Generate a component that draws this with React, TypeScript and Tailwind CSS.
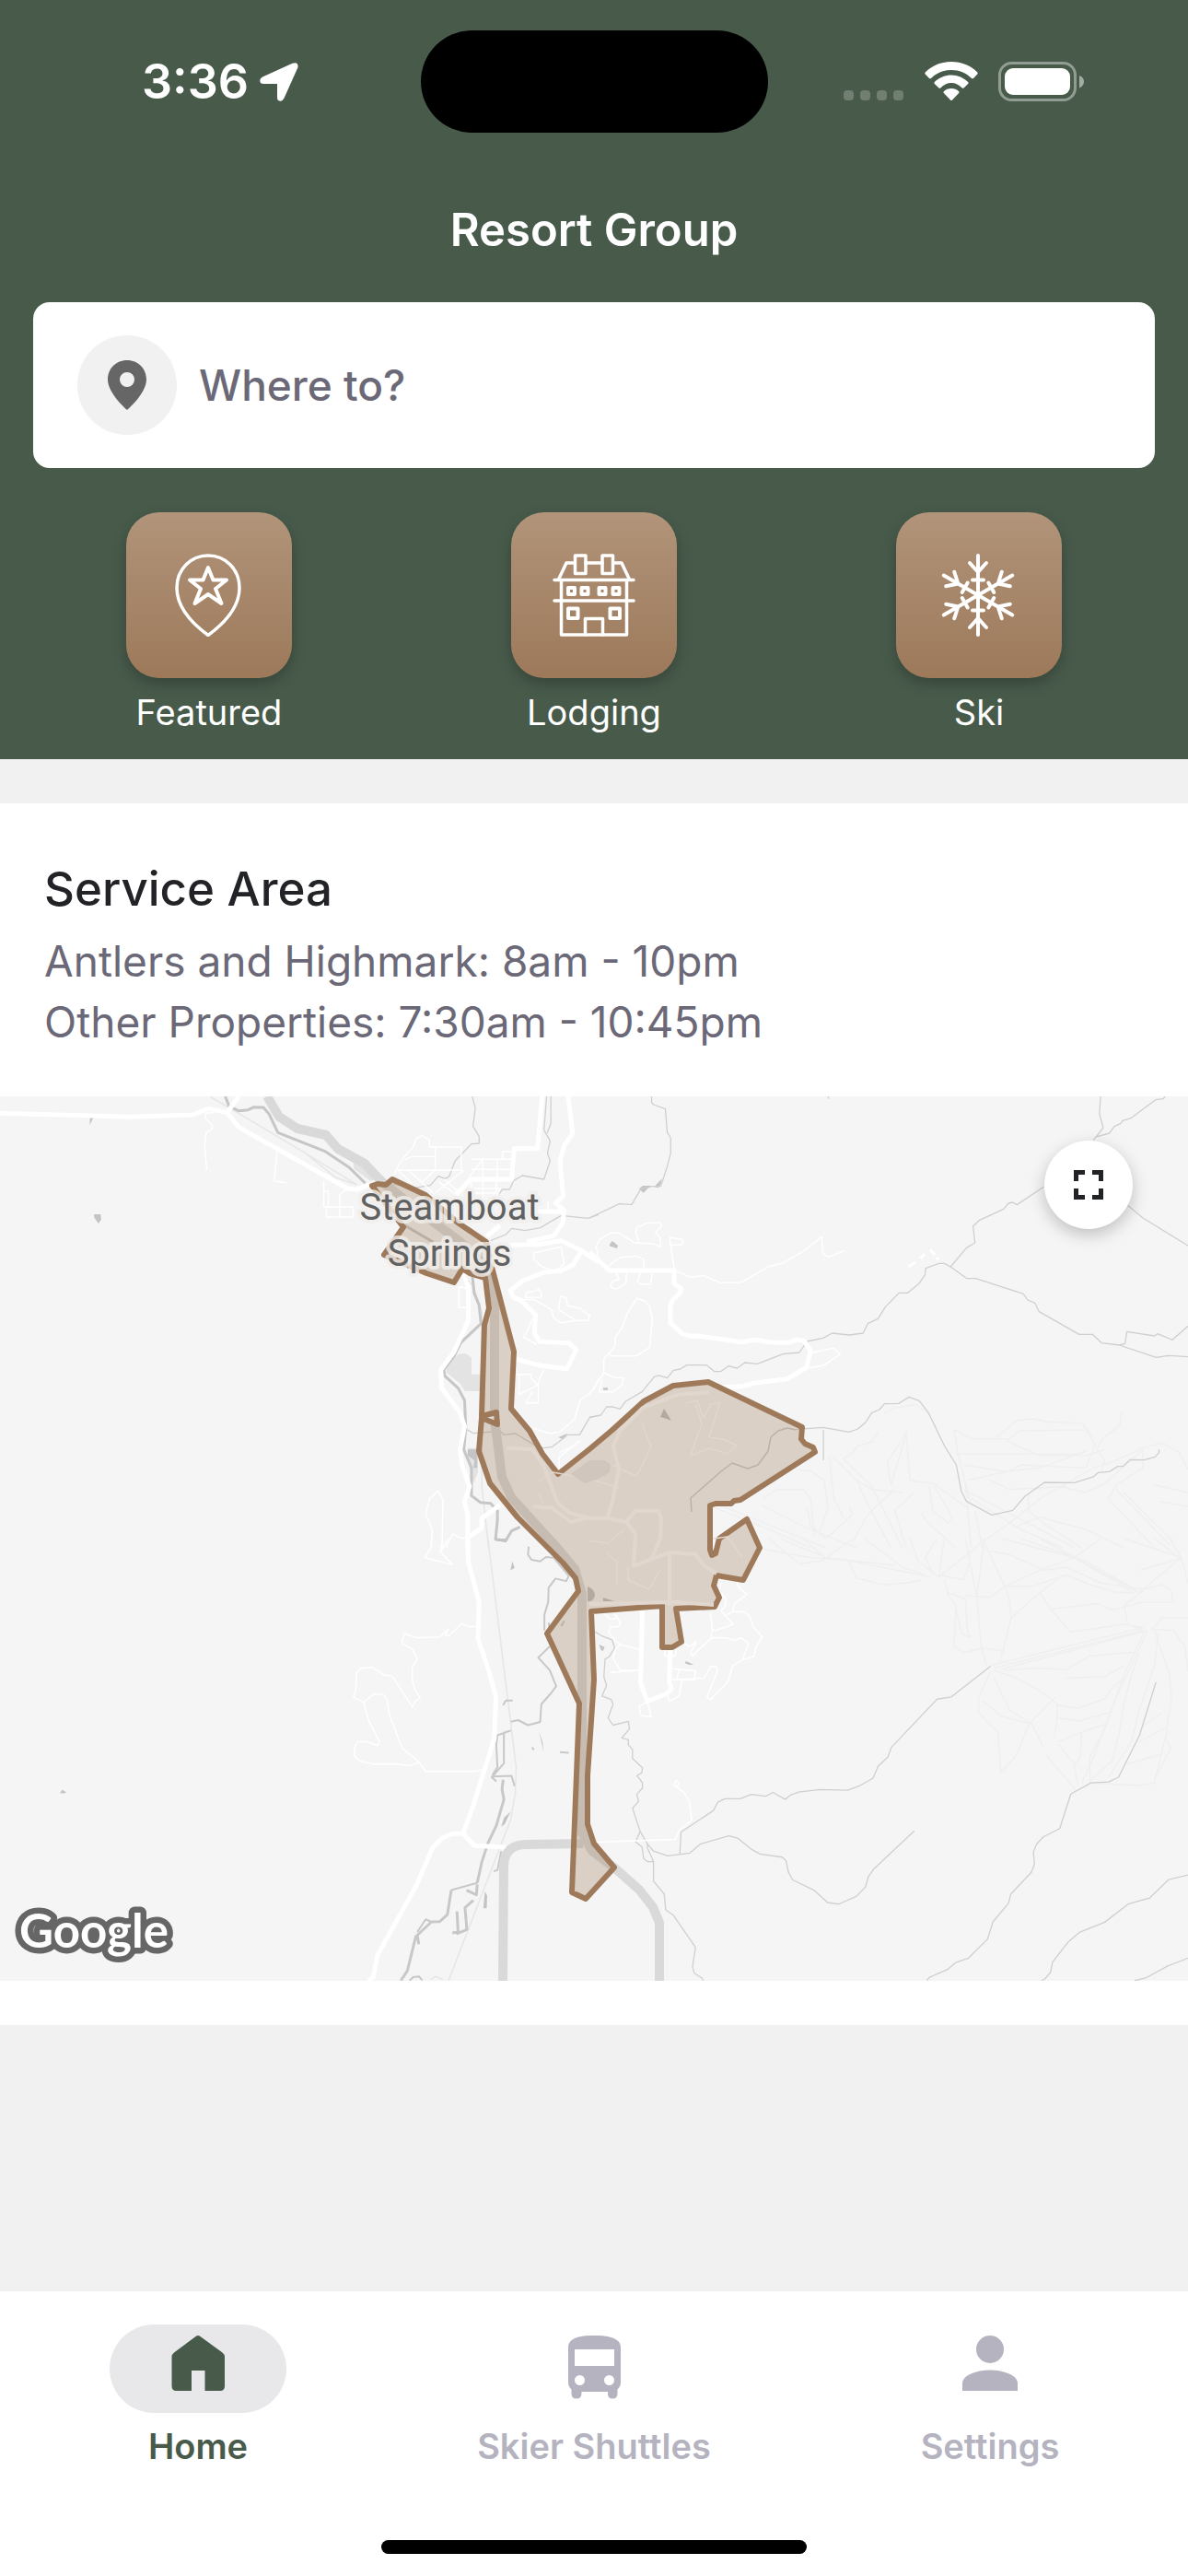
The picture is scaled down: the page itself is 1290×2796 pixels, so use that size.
import React from 'react';

type IconProps = { className?: string };

const FeaturedIcon: React.FC<IconProps> = ({ className }) => (
  <svg viewBox="0 0 90 90" className={className} fill="none" stroke="currentColor" strokeWidth="3.500" strokeLinejoin="round">
    <path d="M44 2C25 2 10 17 10 37C10 58 27 76 44 88.500C61 76 78 58 78 37C78 17 63 2 44 2Z" />
    <path strokeWidth="4" d="M44 15L49.500 28.500H64L52 38L58.500 54L44 44L29.500 54L36 38L24 28.500H38.500Z" />
  </svg>
);

const LodgingIcon: React.FC<IconProps> = ({ className }) => (
  <svg viewBox="0 0 90 90" className={className} fill="none" stroke="currentColor" strokeWidth="3.500" strokeLinejoin="round" strokeLinecap="round">
    <path d="M6.500 28L15 10H24M36 10H54M66 10H75L83.500 28" />
    <path d="M2 28.500H88M2 51H88M9.500 29V88H80.500V29" />
    <path d="M24.500 2H36V21.500H24.500ZM54 2H65.500V21.500H54Z" />
    <path strokeWidth="4" d="M17 37H24V44H17ZM31.500 37H38.500V44H31.500ZM50.500 37H57.500V44H50.500ZM65.500 37H72.500V44H65.500Z" />
    <path strokeWidth="4" d="M17 59.500H27.500V70H17ZM62.500 59.500H73V70H62.500Z" />
    <path d="M35.500 88V70.500H54.500V88" />
  </svg>
);

const SkiIcon: React.FC<IconProps> = ({ className }) => (
  <svg viewBox="0 0 90 90" className={className} fill="none" stroke="currentColor" strokeWidth="4" strokeLinecap="round" strokeLinejoin="round">
    {[0, 60, 120, 180, 240, 300].map((angle) => (
      <path key={angle} transform={`rotate(${angle} 44 45)`} d="M44 45V2M35 10L44 20L53 10M38 28.500H50" />
    ))}
  </svg>
);

const HomeIcon: React.FC<IconProps> = ({ className }) => (
  <svg viewBox="0 0 72 72" className={className} fill="currentColor">
    <path d="M33.500 1Q36 -1 38.500 1L62.500 18.500Q65 20.500 65 23V55Q65 60 60 60H43.500V38H29V60H12.500Q7.500 60 7.500 55V23Q7.500 20.500 10 18.500Z" />
  </svg>
);

const BusIcon: React.FC<IconProps> = ({ className }) => (
  <svg viewBox="0 0 72 72" className={className} fill="currentColor" fillRule="evenodd">
    <path d="M36 0C19 0 8 3 8 13V51Q8 55 11.500 58.500V63Q11.500 68.500 17 68.500Q22.500 68.500 22.500 63V61H51V63Q51 68.500 56 68.500Q61.500 68.500 61.500 63V58.500Q65 55 65 51V13C65 3 53 0 36 0ZM15 15H58V33H15ZM20.500 43A5.500 5.500 0 1 1 20.500 54A5.500 5.500 0 1 1 20.500 43ZM52.500 43A5.500 5.500 0 1 1 52.500 54A5.500 5.500 0 1 1 52.500 43Z" />
  </svg>
);

const PersonIcon: React.FC<IconProps> = ({ className }) => (
  <svg viewBox="0 0 72 72" className={className} fill="currentColor">
    <circle cx="36" cy="15" r="15" />
    <path d="M6 60V52C6 42 24 37.500 36 37.500C48 37.500 66 42 66 52V60Z" />
  </svg>
);

const categories = [
  { label: 'Featured', Icon: FeaturedIcon },
  { label: 'Lodging', Icon: LodgingIcon },
  { label: 'Ski', Icon: SkiIcon },
];

const tabs = [
  { label: 'Home', Icon: HomeIcon, active: true },
  { label: 'Skier Shuttles', Icon: BusIcon, active: false },
  { label: 'Settings', Icon: PersonIcon, active: false },
];

const StatusBar: React.FC = () => (
  <div className="grid grid-cols-3 items-center pt-[33px]">
    <div className="flex items-center justify-center gap-3 pl-12">
      <span className="text-[52px] leading-none font-semibold">3:36</span>
      <svg viewBox="0 0 42 42" className="h-[42px] w-[42px]" fill="currentColor">
        <path d="M35.500 .8Q42 -1.500 41.500 5L26.500 38.500Q24.500 42.500 21.500 41.500Q19 41 19 38V23H4Q.5 23 .3 20Q0 17 3 15.500Z" />
      </svg>
    </div>
    <div className="mx-auto h-[111px] w-[377px] rounded-full bg-black" />
    <div className="flex items-center justify-center pr-14">
      <svg viewBox="0 0 66 43" className="h-[43px] w-[66px]" fill="currentColor" fillOpacity=".22">
        <rect x="0" y="31" width="11" height="11" rx="4" />
        <rect x="18" y="31" width="11" height="11" rx="4" />
        <rect x="36" y="31" width="11" height="11" rx="4" />
        <rect x="54" y="31" width="11" height="11" rx="4" />
      </svg>
      <svg viewBox="0 0 58 43" className="ml-[22px] h-[43px] w-[58px]" fill="currentColor">
        <path d="M29 0C18 0 8 4 .7 11.500Q0 12.500 .7 13.500L5 18Q6 18.500 7 18C13 12 20.500 9 29 9C37.500 9 45 12 51 18Q52 18.500 53 18L57.300 13.500Q58 12.500 57.300 11.500C50 4 40 0 29 0Z" />
        <path d="M29 14.500C22 14.500 15.500 17.500 10.800 22Q10 23 10.800 24L15.500 28.500Q16.500 29 17.300 28.500C20.500 25 24.500 23 29 23C33.500 23 37.500 25 40.700 28.500Q41.500 29 42.500 28.500L47.200 24Q48 23 47.200 22C42.500 17.500 36 14.500 29 14.500Z" />
        <path d="M29 29C26 29 23 30 20.800 32.200Q20 33 20.800 34L28 41.500Q29 42.500 30 41.500L37.200 34Q38 33 37.200 32.200C35 30 32 29 29 29Z" />
      </svg>
      <svg viewBox="0 0 94 43" className="ml-[22px] h-[43px] w-[94px]" fill="currentColor">
        <rect x="1.500" y="1.500" width="82" height="40" rx="13" fill="none" stroke="currentColor" strokeOpacity=".4" strokeWidth="3" />
        <rect x="7" y="7" width="71" height="29" rx="9" />
        <path fillOpacity=".5" d="M88 15Q93 17 93 21.500Q93 26 88 28.500Z" />
      </svg>
    </div>
  </div>
);

const ServiceMap: React.FC = () => (
  <div className="relative bg-[#f5f5f5]">
    <svg
      viewBox="0 0 1290 960"
      className="block h-auto w-full [&_path]:[vector-effect:non-scaling-stroke]"
      fill="none"
      strokeLinejoin="round"
      role="img"
      aria-label="Service area around Steamboat Springs"
    >
      {/* north-west sheet */}
      <g transform="translate(0 -10) scale(.41454 .33333)">
        <g fill="#e3e3e3">
          <path d="M1170 905L1200 870L1218 866L1235 880V935H1260V990H1218L1205 965L1170 930Z" />
          <path d="M926 245L960 265L985 300L970 305L926 265ZM1225 1175H1252V1255L1240 1290L1230 1240Z" />
        </g>
        <g fill="#c4c4c4">
          <path d="M246 414H264L265 432L258 444L247 425ZM236 100L245 98L235 124ZM1463 1140L1487 1127L1475 1147ZM1225 1180H1250V1240H1240L1243 1215L1225 1200Z" />
        </g>
        <g stroke="#e6e6e6" strokeWidth="1.500">
          <path d="M550 30L800 215L935 318M795 210L880 295L935 318M1215 610L1240 650L1262 730V1300L1280 1500" />
        </g>
        <g stroke="#cfcfcf" strokeWidth="1.300">
          <path d="M1237 30L1245 68L1239 128L1255 160V183L1235 185L1192 240L1177 290L1167 298L1148 290L1127 320L1085 328L1030 315" />
          <path d="M1432 30L1425 140L1441 175L1434 215L1441 240L1425 300L1368 288L1345 305L1335 333H1316L1300 360L1270 367M1443 30V118L1433 150" />
          <path d="M1285 500L1325 480L1340 460L1375 467L1415 458L1470 418L1540 427L1568 415M1218 1112L1240 1127L1310 1120L1320 1132L1350 1128L1400 1165L1422 1175L1445 1172L1488 1132H1518L1545 1075L1568 1070" />
        </g>
        <g stroke="#c6c6c6" strokeWidth="3">
          <path d="M590 30L600 62L625 77L650 74L665 65L690 66L705 88L728 148L850 208L915 262L957 313" />
          <path d="M1060 450L1135 505M1237 610L1242 670L1255 710L1260 770L1207 832L1190 875L1163 920L1165 940L1200 980L1217 1020L1220 1110L1215 1180L1235 1240V1330L1258 1352L1285 1355L1303 1380V1410L1298 1472L1325 1476L1340 1445L1362 1432" />
        </g>
        <g stroke="#fff" strokeWidth="1.500">
          <path d="M560 83L540 85L537 100L557 125L554 138L540 148L536 190L542 270M726 210L718 305L750 311M905 335L890 350V390M848 305V390H925V423H855V392M848 338H860V390M890 392V423" />
          <path d="M1030 290L1050 240L1082 195L1090 168L1105 158L1125 172V195H1208V270H1042L1080 315M1140 197V270L1105 310M1060 235L1080 226H1140M1070 270L1135 345M1150 310L1190 345M1165 300L1200 340M1140 345L1215 270" />
          <path d="M1235 235H1340M1265 235L1230 290M1265 235V295M1302 235V295M1235 268H1340M1340 210H1316V235M1235 300V345H1300V300M1265 300V365M1235 330H1310L1300 365H1265M1435 370V400" />
          <path d="M1398 540L1470 520L1478 575L1455 600L1420 585L1398 560ZM1378 668L1398 665L1410 658L1418 670V685H1378ZM1345 690L1400 692L1445 725L1450 750L1468 767L1510 760M1468 682L1482 685L1487 712L1520 720L1545 745L1540 760L1510 760L1463 725ZM1400 745L1372 815L1405 837M1353 935H1392L1390 945L1408 970L1360 1000V935M1425 920L1410 960V1028H1378L1395 990" />
          <path d="M1568 950L1555 985L1520 1020L1505 1080L1468 1122L1440 1128L1395 1110M1520 1150L1465 1205V1250M1465 1190L1500 1170M1228 655L1202 650V718H1225M1148 1315L1125 1340L1115 1390L1132 1440L1130 1500M1148 1315L1160 1345L1158 1500M1168 1500L1185 1455L1205 1468H1225" />
        </g>
        <g stroke="#fff" strokeWidth="5">
          <path d="M0 85L345 97L505 90L545 70L595 83L625 30M595 83L625 130L910 330L935 334L970 315" />
          <path d="M1420 30L1408 200H1347L1340 300H1232L1195 350M1488 30L1500 150L1478 190L1467 240L1475 355L1455 378L1477 400L1475 440L1450 485L1380 503M1400 405H1475M1310 515L1410 512L1470 500L1520 530L1568 570M1525 530L1500 580L1470 598L1425 603L1370 630L1337 662L1345 685L1365 695L1403 742L1400 800L1413 828L1490 833L1510 855L1485 917L1410 905L1350 885M1275 485L1310 450" />
          <path d="M1212 605L1227 650V760L1190 860L1155 920L1157 980L1205 1060L1217 1105L1205 1180L1210 1230L1230 1300L1217 1350L1225 1390V1500M1227 1465L1262 1435V1405L1310 1360" />
        </g>
      </g>

      {/* north-east sheet */}
      <g transform="translate(640 -10) scale(.41454 .33333)">
        <g fill="#c4c4c4">
          <path d="M130 331L140 321H164L150 333L142 344ZM170 325L190 298L187 315L180 328ZM54 510L60 501L75 516L72 525L52 517ZM36 979H48V986H36Z" />
        </g>
        <g stroke="#efefef" strokeWidth="1.500">
          <path d="M772 1060L800 1045L855 1033L890 1065M835 1115L800 1185L780 1220L790 1295L830 1130L840 1280L860 1285L900 1290L940 1325L990 1370M755 1125L740 1155L700 1170L690 1190L665 1210L740 1300L820 1500M628 1200L640 1340L665 1400M635 1200L700 1280L730 1360L790 1500M540 1245L580 1250L615 1280L625 1370L600 1460M455 1340L490 1310L560 1310L580 1340L590 1460" />
          <path d="M955 1115L1000 1145L1100 1145L1125 1120L1300 1115L1325 1165L1300 1240L1130 1230L1100 1250L990 1280M955 1115L965 1195L1000 1360M960 1195H1290M980 1230L1090 1252L1180 1240L1300 1185M1065 1140L1120 1085L1160 1080L1200 1090L1290 1095L1320 1140M1090 1150L1180 1200H1300L1350 1180M1393 1060L1390 1100L1340 1150L1330 1180L1350 1215L1340 1250M1568 1245L1545 1190L1500 1158L1450 1175L1380 1215L1320 1240L1180 1340L1100 1420L1020 1490" />
          <path d="M980 1310L1150 1420L1270 1500M1000 1340L1130 1440L1240 1500M1150 1320V1380L1200 1430L1290 1500M1160 1310L1230 1300L1300 1320L1350 1290L1450 1180V1240M1450 1240L1380 1295L1360 1340L1480 1500M1380 1310L1520 1490M1400 1320L1530 1480M1480 1295L1568 1320M1495 1350L1568 1365M890 1300L900 1380L940 1420L950 1400L900 1290M870 1385L880 1410L960 1500M820 1320L740 1310L700 1280M570 1370L580 1430L620 1470L665 1420L690 1390L680 1370M985 1290L1000 1500M1010 1380L1030 1500" />
          <path d="M330 1370L450 1430L580 1500M350 1365L520 1450L620 1500M450 1360L560 1430L700 1500M800 1310L730 1390L690 1480M850 1320L800 1380L830 1500M1050 1280L1100 1310L1250 1300M1120 1430L1180 1400L1300 1440L1400 1500" />
        </g>
        <g stroke="#cfcfcf" strokeWidth="1.300">
          <path d="M163 30V50L168 57L199 71L204 148L213 165V215L203 262L187 323H165L135 331L111 382L78 380L0 426M626 30V38M613 1117V1215" />
          <path d="M0 1075L30 1068L45 1041H60L80 1048L95 1023L138 992L170 943L182 939L204 947L220 922L238 918L255 905H307L328 926H344L364 908L387 915L407 897L440 901L507 869L550 864L570 828L612 817L636 801L680 807L717 801L729 770L756 754L775 716L811 670H834L863 640L879 612L881 590L915 574H930L946 585L989 623H1012L1137 673L1148 693L1167 703L1178 731L1283 805H1318L1342 833L1388 840L1485 880L1516 874L1568 878" />
          <path d="M946 585L988 523L1010 507L1005 453L1022 433L1085 397L1098 378L1108 375L1120 383L1190 325M1320 173L1346 132L1336 87L1339 30M1324 163L1362 150L1375 128L1391 119L1397 109L1418 101L1483 41L1503 38L1508 30M1410 385L1450 426L1568 516M1388 840L1403 835L1408 796L1480 810L1488 803L1527 823L1568 778" />
          <path d="M540 1115L570 1112L613 1108L680 1123L703 1113L723 1092L740 1060L760 1050L773 1031L810 1030L837 1009L864 1021L888 1060L930 1168L961 1230L974 1315L987 1348L1054 1393L1109 1378L1141 1332L1192 1287L1270 1288L1320 1269L1333 1255L1362 1252L1384 1235H1397L1417 1213L1453 1214L1482 1204L1492 1190V1180" />
        </g>
        <g stroke="#fff" strokeWidth="1.500">
          <path d="M25 558L17 520L28 495L55 475H78L120 508L165 509L187 520L185 490L173 474L190 450L183 440L150 443L124 457L122 475L130 508M48 584L80 555L120 550L142 560L143 580L125 632L135 642H160L165 605M98 600L95 640L70 658L55 650L60 632L78 625L70 605" />
          <path d="M210 490L242 495L247 505L240 513L210 515M210 490L223 598L267 619L300 614L344 637L397 636L470 584L508 572L560 535L608 487L612 543L628 553L668 532" />
          <path d="M124 688L100 735L85 785L67 815V845L52 865L38 885V930L65 945L90 947L85 970L62 992H25L33 955M124 688L147 697L158 715L165 755L158 848L123 875H55L52 865M38 930L0 1000M583 865L640 850L657 870L612 907L570 915" />
        </g>
        <g stroke="#fff" strokeWidth="5">
          <path d="M0 537L52 597H222V640L240 655L238 670L218 693L212 713V767L243 803L265 811L285 810L400 830L432 823L475 831L520 832L545 822L563 827L580 860L568 913L518 950L435 963L400 974L350 977" />
          <path strokeWidth="3" d="M835 585L855 570M867 558L878 543M892 530L905 545M908 560L916 556" />
        </g>
      </g>

      {/* south-west sheet */}
      <g transform="translate(0 480) scale(.41454 .34439)">
        <g fill="#c4c4c4">
          <path d="M157 803L163 791L174 800L168 803ZM1337 100L1342 72L1348 92ZM1295 0H1332L1325 12L1297 6ZM1313 908L1320 880L1338 860L1330 880L1322 900ZM1266 1165L1270 1112L1276 1125L1275 1165ZM1412 610L1421 640L1424 672L1418 640Z" />
        </g>
        <g stroke="#e6e6e6" strokeWidth="1.500">
          <path d="M1278 0L1352 720L1350 800L1338 885L1175 1393M1128 1390L1142 1380L1160 1390" />
        </g>
        <g stroke="#c8c8c8" strokeWidth="2">
          <path d="M1385 25L1383 50L1392 67L1415 72L1430 58L1450 60L1490 118L1483 134L1455 126L1437 155L1436 200L1426 240V290M1440 340L1410 375L1440 415L1457 465L1445 485L1418 522L1415 578L1383 588L1357 572L1338 577M1338 605L1320 612V708L1288 752L1300 765M1338 605L1303 620L1300 650L1303 720L1290 745M1290 750L1340 748L1348 780" />
          <path strokeWidth="3" d="M1318 760L1315 790L1320 822L1300 905L1278 960L1262 1020L1250 1085M1182 1108L1172 1185L1152 1207L1130 1208L1093 1250L1097 1278M1090 1250L1067 1362L1050 1393M1250 1090L1248 1123L1222 1108M1197 1175L1200 1240L1185 1243M1240 1140L1218 1163L1223 1232L1195 1246" />
          <path d="M1250 1085L1182 1108M1093 1240L1115 1200L1130 1208M1313 985L1303 1045L1293 1048M1073 1393L1082 1382L1098 1380L1106 1392M1318 525L1325 510L1343 510M1394 658L1398 666M1467 673L1490 675M1437 265L1440 285M1478 260L1470 275" />
        </g>
        <g stroke="#fff" strokeWidth="1.500">
          <path d="M1130 0V25L1113 60L1185 82L1153 40L1160 0M1175 0L1155 40M1250 277H1225L1210 268L1175 307L1166 305L1175 285L1152 310L1090 312L1060 300L1053 320L1054 333L1080 348L1093 380L1080 405V445L1087 478L1101 502L1088 512L1080 530L1027 433L1005 430L975 405L947 408L933 425V470L926 500L952 516L980 489L1005 493L1014 507L1020 555L1053 660L1098 705L1075 716L1040 711H982L942 701L927 682L930 655L936 640H962L988 652L994 640L967 577L952 516M1098 705L1115 734H1245L1262 728" />
        </g>
        <g stroke="#fff" strokeWidth="5">
          <path d="M1225 0L1227 75L1255 200L1252 315L1280 415L1299 500L1295 630L1240 840L1213 930L1243 968L1325 973M1213 930H1185L1157 945L1133 975L1092 1090L988 1315L978 1382L965 1393" />
        </g>
      </g>

      {/* south-east sheet */}
      <g transform="translate(640 480) scale(.41454 .34439)">
        <g fill="#c4c4c4">
          <path d="M25 334L40 342L35 356L30 350ZM251 386L260 390L273 397L262 398L252 394Z" />
        </g>
        <g stroke="#efefef" strokeWidth="1.500">
          <path d="M440 30L580 60L680 70L890 120M470 0L550 80L610 70L690 0M500 0L620 60L800 85M560 0L620 65M680 70L700 125L770 145L830 140L870 130M720 0L820 90L880 115M840 0L860 70L915 120L980 60L1020 20M910 0L880 60L900 110M930 0L915 115L980 130L995 80M1030 0L1080 130L1100 190L1105 250L1075 390M985 0L1015 185M1035 0L1015 180L1025 330L1040 400" />
          <path d="M930 130L940 180L960 210L955 340L980 360L1030 345L1090 355M940 170L985 190L990 290L998 310L975 300L960 220M985 180L1050 185L1090 150L1180 100L1270 60L1340 0M1050 40L1100 50L1190 100L1250 90L1340 140L1450 160M1090 150L1160 150L1250 115L1300 140L1380 170H1430M1105 250L1180 170L1240 115M1180 170L1210 225L1260 295L1400 270L1450 280M1210 222L1330 205L1370 225L1450 200L1530 200" />
          <path d="M1050 400L1450 280M1060 408L1450 290M1075 413L1460 290M1080 0L1270 60L1420 165M1130 0L1300 70L1430 160M1180 0L1440 170L1550 60L1520 0M1400 0L1550 60L1568 140M1450 165L1400 210L1410 270L1450 290M1450 160L1500 145L1525 165L1530 205M1475 285L1500 250L1568 250M1475 285L1530 290L1560 340L1568 420M1440 100L1500 80L1550 60M1480 0L1550 65" />
          <path d="M1455 290L1400 430L1350 600L1310 690L1312 770M1462 290L1420 400L1380 500L1320 690L1290 770M1480 290L1520 430L1525 500L1510 620L1480 770L1440 778L1310 770M1490 300L1480 400L1440 540L1420 640L1360 750M1440 360L1420 430L1400 520L1390 600L1370 700L1310 765M1060 415L1120 440L1180 480L1225 520V570L1218 630M1050 420L1020 500V550L1070 610L1078 738L1120 680L1152 583L1220 500M1030 510L1080 560L1160 585L1190 660M1060 440L1100 540L1160 585M1225 525L1280 535L1350 505L1370 470L1400 440M1225 565L1280 575L1370 545M1228 640L1290 610L1350 585M1290 610L1285 690L1265 720M1195 680L1275 795M1228 648L1270 710L1280 780M1248 440L1350 435L1400 400M1085 415L1170 408L1250 412L1310 370L1430 358M1500 550L1450 590M1510 595L1440 640M1495 680L1410 710M1510 630L1523 660L1480 760" />
        </g>
        <g stroke="#cfcfcf" strokeWidth="1.300">
          <path d="M10 290L30 305L60 320L66 345L52 372L41 380L38 435L45 463L33 496L57 507L62 522L49 565L62 588L102 576L105 600L85 628L102 634V650L113 665V693L139 722L137 738L125 747L139 770V786L124 806L129 828L113 850L133 923L152 962L168 985L205 1000L263 991L290 963L365 937L388 944L423 978L447 994L505 1004L515 1015L521 1050L532 1075L588 1108L624 1147L653 1152L700 1127L723 1098L731 1065L746 1040L851 921" />
          <path d="M133 923L121 956L138 972L142 1008L152 1018H168L152 975V962M168 1018V1080L196 1120L200 1170L220 1187L278 1288L270 1350L275 1370L295 1385L298 1393M237 993L240 925L325 857L336 831L355 820H395L424 806L462 812L481 800L513 822L527 808L548 799L605 791L676 793L708 779L743 755L756 718L782 688L791 658L911 506L948 499L1051 402" />
          <path d="M1484 453L1441 620L1386 752L1360 767L1314 770L1261 805L1232 914L1189 940L1172 962L1163 987L1166 1025L1158 1051L1104 1120L1098 1149L1057 1208L1043 1262L993 1322L961 1335L938 1358L890 1383L884 1393M1568 1060L1517 1075L1467 1133L1411 1152L1350 1209L1285 1240L1255 1270L1213 1335L1208 1367L1193 1388L1184 1393M1568 1322L1515 1347L1457 1385L1428 1393" />
        </g>
        <g stroke="#fff" strokeWidth="1.500">
          <path d="M40 238L55 255L75 250L65 238M72 250L82 265L75 278H55L50 295L70 325L85 335L130 349M80 335L68 350L62 375L80 415H130L55 422M215 410L278 417L275 445H215M237 410L228 445M215 445L300 440L318 403L332 402L336 415L308 500L317 507L362 452L375 402L402 380L417 330L398 313L380 320L355 313L320 312L295 340L270 370L265 360L280 325L262 340L245 328M243 445L235 495L210 513L203 490M152 515L130 528L135 558L162 562L152 515M198 345V370H225L228 350" />
          <path d="M345 140L340 165L358 190L355 215L345 228L377 270L330 290L322 285L317 235M385 135L392 155L413 175L380 205L375 230L405 230L420 245L430 280L453 310L435 345L432 370L402 382M358 240L375 232M322 287L318 312M15 957L225 948L235 920L268 887L262 830L248 800L222 778L226 762L235 770L230 783" />
        </g>
        <g stroke="#fff" strokeWidth="5">
          <path d="M139 220L134 455L152 513L200 490L215 475L209 450L212 340" />
        </g>
      </g>

      {/* highway */}
      <path stroke="#d9d9d9" strokeWidth="10" d="M290 0L303 22L323 35L354 42L367 57L396 73L415 93L462 130L500 158L528 185L537 223V350L545 413L555 435L605 490L624 513L632 540V800L643 819L668 838L694 861L709 880L716 897V960M633 811L572 812Q548 812 547 835L546 960" />

      {/* service area */}
      <path
        fill="#9f7a5a"
        fillOpacity=".3"
        stroke="#9f7a5a"
        strokeWidth="6"
        d="M404 97L410 95L419 96L426 90L462 107L497 137L528 158L534 185L558 277L555 339L575 363L589 388L606 410L640 383L665 362L699 331L731 314L769 310L871 359L870 372L874 377L883 381L885 386L804 438L797 439L794 442H777L771 444V492L773 498L777 496L781 480L811 459L825 490L807 525L778 520L775 531L781 544L776 554L734 556L740 592L730 598H719V553L642 559L645 633L638 737V790L645 811L667 837L636 871L621 864L629 659L594 583L628 537L625 523L611 506L562 457L532 420L520 385L523 349L540 356L539 343L523 347L526 248L531 230L527 197L510 192L502 187L493 202L463 192L417 172L438 142Z"
      />
      <g stroke="#e1d7ce" strokeWidth="4">
        <path d="M770 321L735 324L698 338L673 363L666 380L672 405L665 440L659 458H640L618 452L605 440L590 400L578 383L550 382M579 445L600 447L620 462L640 457M659 458L680 462L690 475L688 510L700 505L727 495L755 497L765 510L778 518M680 462L690 450L715 450L718 458L717 480L706 505M727 497V553M640 551L734 549L775 552" />
        <path strokeWidth="1.500" d="M697 355L707 380L695 405L690 412L665 400M745 333L757 330L764 349L772 334L782 332L770 370L785 372L800 379L790 388L770 382L750 390L762 355L755 334M585 418L600 408L640 415L672 425M585 430L590 442M658 495L670 505V530M682 510V525L705 535L716 515M640 482L660 485L678 470M775 480L790 478L806 500" />
      </g>
      <path stroke="#bdb1a7" strokeWidth="1.500" d="M751 451L750 436L783 407L795 398L812 404L823 400L834 385L837 370L845 363L855 360L864 362" />
      <path fill="#b5aaa1" d="M717 348L721 339L729 352L724 350ZM638 532Q646 535 646 542Q644 549 638 548ZM655 544L667 548H655Z" />
      <path fill="#d1c6bd" d="M620 410L640 395L657 395L663 400L662 408L650 415L635 420Z" />

      <text
        textAnchor="middle"
        fill="#616161"
        stroke="#f1efed"
        strokeOpacity=".8"
        strokeWidth="8"
        className="font-[Roboto,sans-serif] text-[40px] [paint-order:stroke]"
      >
        <tspan x="488" y="134">Steamboat</tspan>
        <tspan x="488" y="184">Springs</tspan>
      </text>
      <text
        x="21"
        y="924"
        fill="#fff"
        stroke="#666"
        strokeWidth="13"
        className="font-[Lato,sans-serif] text-[51px] font-bold [paint-order:stroke]"
      >
        Google
      </text>
    </svg>
    <button
      className="absolute top-12 right-[60px] flex h-24 w-24 items-center justify-center rounded-full bg-white text-[#222326] shadow-[0_6px_18px_rgba(0,0,0,0.22)]"
      aria-label="Expand map"
    >
      <svg viewBox="0 0 32 32" className="h-8 w-8" fill="none" stroke="currentColor" strokeWidth="5">
        <path d="M2.500 12V2.500H12M20 2.500H29.500V12M29.500 20V29.500H20M12 29.500H2.500V20" />
      </svg>
    </button>
  </div>
);

const App: React.FC = () => {
  return (
    <div className="flex min-h-screen flex-col bg-[#f1f1f1] font-[Inter,sans-serif]">
      <header className="bg-[#485b4b] pb-[26px] text-white">
        <StatusBar />
        <h1 className="mt-[76px] text-center text-[49px] leading-[60px] font-semibold">Resort Group</h1>
        <label className="mx-9 mt-12 flex h-[180px] items-center gap-6 rounded-[18px] bg-white px-12">
          <span className="flex h-[108px] w-[108px] shrink-0 items-center justify-center rounded-full bg-[#f1f1f1]">
            <svg viewBox="0 0 42 54" className="h-[54px] w-[42px]" fill="#666" fillRule="evenodd">
              <path d="M21 0C9 0 0 9 0 21C0 36 21 54 21 54C21 54 42 36 42 21C42 9 33 0 21 0ZM21 13A8 8 0 1 1 21 29A8 8 0 1 1 21 13Z" />
            </svg>
          </span>
          <input
            type="text"
            placeholder="Where to?"
            aria-label="Where to?"
            className="w-full text-[46px] leading-[60px] font-medium text-[#222326] outline-none placeholder:text-[#6b6877]"
          />
        </label>
        <div className="mx-[18px] mt-12 grid grid-cols-3">
          {categories.map(({ label, Icon }) => (
            <button key={label} className="flex flex-col items-center gap-3">
              <span className="flex h-[180px] w-[180px] items-center justify-center rounded-[36px] bg-linear-to-b from-[#b1947a] to-[#9d795a] shadow-[0_6px_15px_rgba(0,0,0,0.25)]">
                <Icon className="h-[90px] w-[90px]" />
              </span>
              <span className="text-[38px] leading-[50px]">{label}</span>
            </button>
          ))}
        </div>
      </header>

      <section className="mt-12 bg-white pb-12">
        <div className="px-12 pt-[60px] pb-12">
          <h2 className="text-[51px] leading-[66px] font-medium text-[#222326]">Service Area</h2>
          <p className="mt-3 text-[46px] leading-[66px] text-[#6b6877]">
            Antlers and Highmark: 8am - 10pm
            <br />
            Other Properties: 7:30am - 10:45pm
          </p>
        </div>
        <ServiceMap />
      </section>

      <nav className="mt-auto bg-white pt-9">
        <div className="grid grid-cols-3">
          {tabs.map(({ label, Icon, active }) => (
            <a
              key={label}
              href="#"
              aria-current={active ? 'page' : undefined}
              className={`flex flex-col items-center gap-3 ${active ? 'text-[#485b4b]' : 'text-[#b4b3bf]'}`}
            >
              <span className={`flex h-24 w-48 items-center justify-center rounded-full ${active ? 'bg-[#e8e8ea]' : ''}`}>
                <Icon className="h-[72px] w-[72px]" />
              </span>
              <span className="text-[38px] leading-[48px] font-semibold">{label}</span>
            </a>
          ))}
        </div>
        <div className="mx-auto mt-[78px] mb-6 h-[15px] w-[462px] rounded-full bg-black" />
      </nav>
    </div>
  );
};

export default App;
